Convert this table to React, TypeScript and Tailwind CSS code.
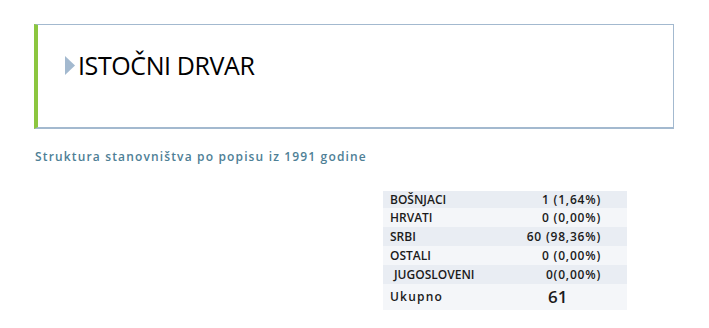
import React from "react";

const rows: { label: string; value: string; indent?: boolean; bg: string; h: string }[] = [
  { label: "BOŠNJACI", value: "1 (1,64%)", bg: "bg-[#e9edf3]", h: "h-[17px]" },
  { label: "HRVATI", value: "0 (0,00%)", bg: "bg-[#f4f6f9]", h: "h-[19px]" },
  { label: "SRBI", value: "60 (98,36%)", bg: "bg-[#e9edf3]", h: "h-[19px]" },
  { label: "OSTALI", value: "0 (0,00%)", bg: "bg-[#f4f6f9]", h: "h-[19px]" },
  { label: "JUGOSLOVENI", value: "0(0,00%)", indent: true, bg: "bg-[#e9edf3]", h: "h-[19px]" },
];

export default function App() {
  return (
    <div className="w-[709px] h-[328px] bg-white overflow-hidden" style={{ fontFamily: '"Open Sans", "Liberation Sans", sans-serif' }}>
      <div className="pt-[24px] pl-[34px]">
        <div className="w-[640px] h-[105px] border-t border-r border-b-2 border-[#a3b9cf] border-l-4 border-l-[#8cc63f] pt-[22px] pl-[27px]">
          <div className="flex items-center h-[36px]">
            <svg width="10" height="19" viewBox="0 0 10 19" className="mr-[3px] mt-[1px]">
              <polygon points="0,0 10,9.5 0,19" fill="#a3b9cf" />
            </svg>
            <span className="text-[25px] leading-none text-black font-normal tracking-[-0.4px]">ISTOČNI DRVAR</span>
          </div>
        </div>
      </div>
      <div className="pl-[35px] mt-[20px] text-[12px] leading-[16px] font-semibold text-[#4e8096] tracking-[1.15px]">
        Struktura stanovništva po popisu iz 1991 godine
      </div>
      <div className="ml-[383px] mt-[26px] w-[244px] text-[#1b1b1b]">
        {rows.map((r) => (
          <div key={r.label} className={`flex items-center ${r.h} ${r.bg}`}>
            <div className={`${r.indent ? "pl-[11px]" : "pl-[7px]"} text-[12px] font-semibold tracking-[0px] w-[140px]`}>{r.label}</div>
            <div className="flex-1 text-right pr-[26px] text-[12px] font-semibold tracking-[0.8px]">{r.value}</div>
          </div>
        ))}
        <div className="flex items-center h-[26px] bg-[#f4f6f9]">
          <div className="pl-[7px] w-[165px] font-semibold text-[12px] tracking-[1.2px]">Ukupno</div>
          <div className="text-[17px] font-semibold">61</div>
        </div>
      </div>
    </div>
  );
}
